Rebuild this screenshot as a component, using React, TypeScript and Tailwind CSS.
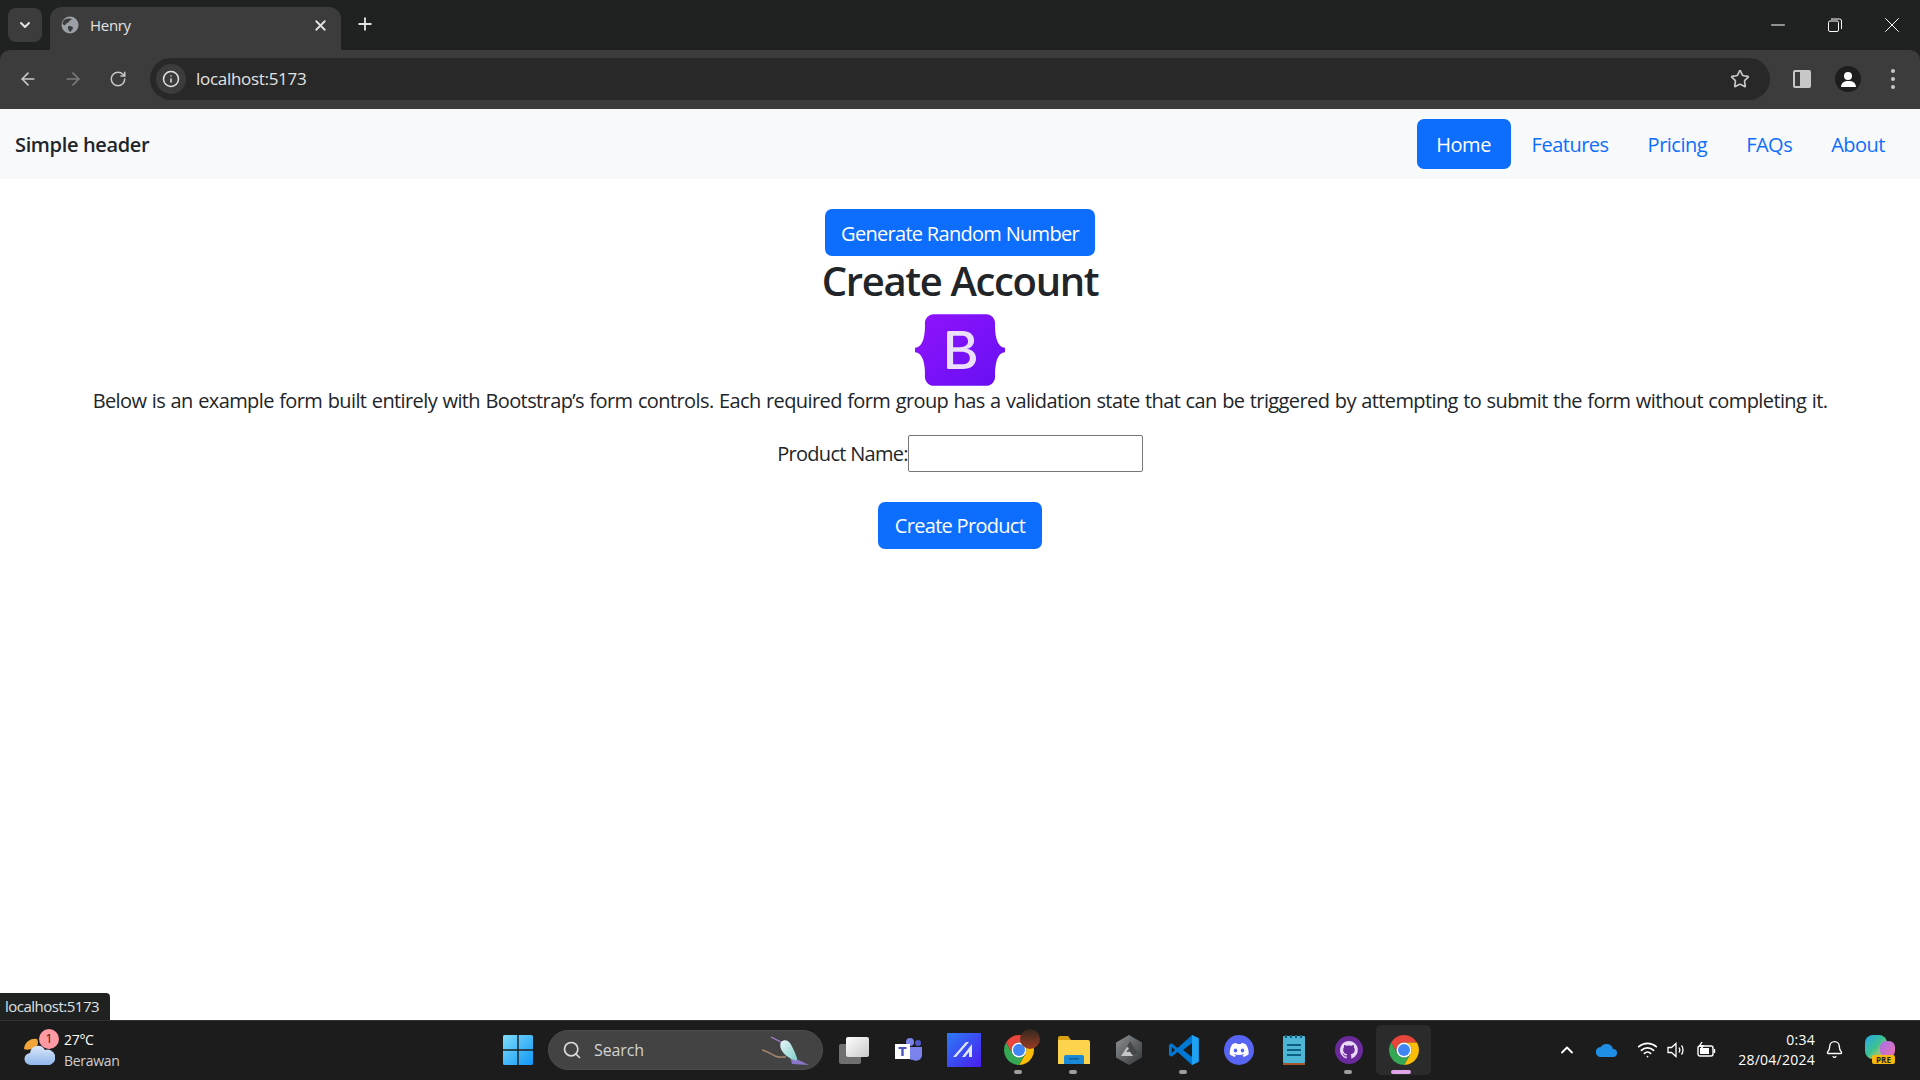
import React from "react";
import { ArrowLeft, ArrowRight, RotateCw, Info, Star, X, Plus, ChevronDown, ChevronUp, Search, Wifi, Bell, Minus } from "lucide-react";

const FONT = "font-['Open_Sans','Noto_Sans',sans-serif]";

function ChromeIcon({ size = 44 }: { size?: number }) {
  return (
    <svg width={size} height={size} viewBox="0 0 48 48">
      <path d="M6.68 14A20 20 0 0 1 41.32 14H24A10 10 0 0 0 15.34 29Z" fill="#e8453c" />
      <path d="M41.32 14A20 20 0 0 1 24 44L32.66 29A10 10 0 0 0 24 14Z" fill="#fbbc05" />
      <path d="M24 44A20 20 0 0 1 6.68 14L15.34 29A10 10 0 0 0 32.66 29Z" fill="#34a853" />
      <circle cx="24" cy="24" r="10" fill="#fff" />
      <circle cx="24" cy="24" r="8" fill="#3f86f4" />
    </svg>
  );
}

function BootstrapLogo() {
  return (
    <svg width="90" height="72" viewBox="0 0 118 94">
      <defs>
        <linearGradient id="bs" x1="0" y1="0" x2="1" y2="1">
          <stop offset="0" stopColor="#9013fe" />
          <stop offset="1" stopColor="#6610f2" />
        </linearGradient>
      </defs>
      <rect x="40" y="20" width="42" height="54" fill="#ecdffc" />
      <path
        fill="url(#bs)"
        fillRule="evenodd"
        d="M24.509 0c-6.733 0-11.715 5.893-11.492 12.284.214 6.14-.064 14.092-2.066 20.577C8.943 39.365 5.547 43.485 0 44.014v5.972c5.547.529 8.943 4.649 10.951 11.153 2.002 6.485 2.28 14.437 2.066 20.577C12.794 88.106 17.776 94 24.51 94H93.5c6.733 0 11.714-5.893 11.491-12.284-.214-6.14.064-14.092 2.066-20.577 2.009-6.504 5.396-10.624 10.943-11.153v-5.972c-5.547-.529-8.934-4.649-10.943-11.153-2.002-6.484-2.28-14.437-2.066-20.577C105.214 5.894 100.233 0 93.5 0H24.508zM80 57.863C80 66.663 73.436 72 62.543 72H44a2 2 0 01-2-2V24a2 2 0 012-2h18.437c9.083 0 15.044 4.92 15.044 12.474 0 5.302-4.01 10.049-9.119 10.88v.277C75.317 46.394 80 51.21 80 57.863zM60.521 28.34H49.948v14.934h8.905c6.884 0 10.68-2.772 10.68-7.727 0-4.643-3.264-7.207-8.012-7.207zM49.948 49.2v16.458H60.91c7.167 0 10.964-2.876 10.964-8.281 0-5.406-3.903-8.178-11.425-8.178H49.948z"
      />
    </svg>
  );
}

function TabBar() {
  return (
    <div className="h-[50px] bg-[#202221] flex items-end shrink-0">
      <div className="w-[34px] h-[34px] ml-2 mb-[8px] rounded-lg bg-[#3c3c3c] flex items-center justify-center text-[#e3e3e3]">
        <ChevronDown size={16} strokeWidth={3} />
      </div>
      <div className="w-[291px] h-[43px] ml-2 bg-[#3c3c3c] rounded-t-xl flex items-center pl-[11px] pr-3 pb-[7px] text-[#e3e3e3]">
        <svg width="18" height="18" viewBox="0 0 18 18">
          <circle cx="9" cy="9" r="8.5" fill="#9aa0a6" />
          <path d="M4 3.500c2-1 5-1.500 7-.5-1 1.500-2.500 1-3 2.500S5 7 4.500 8.500 3 9 1.500 8C1.500 6 2.500 4.500 4 3.500zM8 10c2 0 4 .5 4 2s-1.500 1.500-2 3.500c-1 .5-2 0-2.500-1.500S6.500 10 8 10z" fill="#3c3c3c" />
        </svg>
        <span className={`${FONT} ml-[11px] text-[15px] font-medium tracking-[-0.3px]`}>Henry</span>
        <X size={17} strokeWidth={2.5} className="ml-auto" />
      </div>
      <div className="w-[48px] h-[50px] pb-[2px] flex items-center justify-center text-[#e3e3e3]">
        <Plus size={20} strokeWidth={2.2} />
      </div>
      <div className="ml-auto h-[50px] flex items-center text-white pb-[1px]">
        <div className="w-[56px] flex justify-center"><Minus size={22} strokeWidth={1.1} /></div>
        <div className="w-[57px] flex justify-center">
          <svg width="14" height="14" viewBox="0 0 14 14" fill="none" stroke="#fff" strokeWidth="1">
            <rect x="0.500" y="3" width="10" height="10.500" rx="1.500" />
            <path d="M3 1h8.500A2 2 0 0 1 13.500 3v8" />
          </svg>
        </div>
        <div className="w-[57px] flex justify-center"><X size={26} strokeWidth={0.9} /></div>
      </div>
    </div>
  );
}

function Toolbar() {
  return (
    <div className="h-[59px] pb-[1px] bg-[#3c3c3c] rounded-t-[10px] flex items-center shrink-0 text-[#c7c7c7]">
      <ArrowLeft size={20} strokeWidth={2} className="ml-[18px]" />
      <ArrowRight size={20} strokeWidth={2} className="ml-[25px] text-[#7b7b7b]" />
      <RotateCw size={18} strokeWidth={2} className="ml-[26px]" />
      <div className="ml-[23px] w-[1620px] h-[42px] bg-[#282828] rounded-full flex items-center pl-[6px] pr-[20px]">
        <div className="w-[30px] h-[30px] rounded-full bg-[#3c3c3c] flex items-center justify-center text-[#e3e3e3]">
          <Info size={18} strokeWidth={2} />
        </div>
        <span className={`${FONT} ml-[10px] text-[17px] tracking-[-0.3px] text-[#e3e3e3]`}>localhost:5173</span>
        <Star size={20} strokeWidth={2} className="ml-auto text-[#c7c7c7]" />
      </div>
      <div className="ml-[23px] w-[18px] h-[18px] rounded-[2px] border-2 border-[#c7c7c7] flex justify-end">
        <div className="w-[9px] bg-[#c7c7c7]" />
      </div>
      <div className="ml-[24px] w-[26px] h-[26px] rounded-full bg-[#1d1d1d] flex flex-col items-center justify-center gap-[1px]">
        <div className="w-[8px] h-[8px] rounded-full bg-white" />
        <div className="w-[15px] h-[6px] rounded-t-full bg-white" />
      </div>
      <div className="ml-[30px] flex flex-col gap-[4px]">
        <div className="w-[4px] h-[4px] rounded-full bg-[#c7c7c7]" />
        <div className="w-[4px] h-[4px] rounded-full bg-[#c7c7c7]" />
        <div className="w-[4px] h-[4px] rounded-full bg-[#c7c7c7]" />
      </div>
    </div>
  );
}

function NavBar() {
  const links = ["Features", "Pricing", "FAQs", "About"];
  return (
    <div className={`${FONT} h-[70px] bg-[#f8f9fa] flex items-center pl-[15px] pr-[35px] shrink-0 text-[20px] tracking-[-0.5px]`}>
      <span className="font-semibold text-[#212529] pt-[1px] tracking-[-0.35px]">Simple header</span>
      <div className="ml-auto flex items-center gap-[39px]">
        <div className="h-[50px] w-[94px] -mr-[18px] pt-[2px] bg-[#0d6efd] text-white rounded-[7px] flex items-center justify-center">Home</div>
        {links.map((label) => (
          <span key={label} className="pt-[1px] text-[#0d6efd]">{label}</span>
        ))}
      </div>
    </div>
  );
}

function Main() {
  return (
    <div className={`${FONT} flex-1 bg-white flex flex-col items-center pt-[30px] text-[20px] tracking-[-0.7px] text-[#212529]`}>
      <button className="h-[47px] w-[270px] pt-[2px] bg-[#0d6efd] text-white rounded-[7px] whitespace-nowrap">Generate Random Number</button>
      <h1 className="text-[40px] leading-[48px] font-semibold mt-[1px] mb-[9px] tracking-[-1.35px]">Create Account</h1>
      <BootstrapLogo />
      <p className="leading-[30px] mb-[19px] whitespace-nowrap tracking-[-0.6px] [word-spacing:0.8px]">
        Below is an example form built entirely with Bootstrap’s form controls. Each required form group has a validation state that can be triggered by attempting to submit the form without completing it.
      </p>
      <div className="flex items-center h-[37px]">
        <label>Product Name:</label>
        <input className="w-[235px] h-[37px] bg-white border border-[#767676] rounded-[2px]" />
      </div>
      <button className="mt-[30px] h-[47px] w-[164px] bg-[#0d6efd] text-white rounded-[7px] whitespace-nowrap">Create Product</button>
    </div>
  );
}

function WeatherIcon() {
  return (
    <div className="relative w-[32px] h-[34px]">
      <svg width="32" height="34" viewBox="0 0 32 34">
        <defs>
          <linearGradient id="cloud" x1="0" y1="0" x2="0" y2="1">
            <stop offset="0" stopColor="#dbe8fa" />
            <stop offset="1" stopColor="#8fb6ea" />
          </linearGradient>
        </defs>
        <path d="M14 2a11 11 0 0 0-13 10c2 1 6 1 10-1s5-5 3-9z" fill="#f0a43a" transform="translate(0 4)" />
        <path d="M7 32a6 6 0 0 1-1-12 8 8 0 0 1 15-3 7 7 0 0 1 5 15z" fill="url(#cloud)" transform="translate(1 0)" />
      </svg>
      <div className="absolute -top-[4px] left-[16px] w-[20px] h-[20px] rounded-full bg-[#ff99a4] text-[#3a1a1f] text-[13px] flex items-center justify-center">1</div>
    </div>
  );
}

function TaskIcon({ children, dot, active }: { children?: React.ReactNode; dot?: boolean; active?: boolean }) {
  return (
    <div className={`relative w-[55px] h-[50px] rounded-[5px] flex items-center justify-center ${active ? "bg-[#2b2b2b]" : ""}`}>
      {children}
      {dot && <div className="absolute bottom-[1px] left-[23px] w-[8px] h-[4px] rounded-full bg-[#9e9e9e]" />}
      {active && <div className="absolute bottom-[1px] left-[15px] w-[20px] h-[4px] rounded-full bg-[#dfa6e6]" />}
    </div>
  );
}

function Taskbar() {
  return (
    <div className={`${FONT} h-[60px] bg-[#1c1c1c] border-t border-[#333] flex items-center shrink-0 relative text-white`}>
      <div className="flex items-center ml-[23px] w-[480px] pb-[2px]">
        <WeatherIcon />
        <div className="ml-[9px] text-[14px] leading-[21px] tracking-[-0.3px]">
          <div>27°C</div>
          <div className="text-[#cfcfcf]">Berawan</div>
        </div>
      </div>

      {/* start + search */}
      <div className="absolute left-[503px] top-[4px] flex items-center">
        <svg width="30" height="30" viewBox="0 0 30 30">
          <defs>
            <linearGradient id="win" x1="0" y1="0" x2="1" y2="1">
              <stop offset="0" stopColor="#7fdcfb" />
              <stop offset="1" stopColor="#0f97f5" />
            </linearGradient>
          </defs>
          <path d="M0 1.500A1.500 1.500 0 0 1 1.500 0H14.300V14.300H0zM15.700 0H28.500A1.500 1.500 0 0 1 30 1.500V14.300H15.700zM0 15.700H14.300V30H1.500A1.500 1.500 0 0 1 0 28.500zM15.700 15.700H30V28.500A1.500 1.500 0 0 1 28.500 30H15.700z" fill="url(#win)" />
        </svg>
        <div className="ml-[15px] w-[275px] h-[40px] rounded-full bg-[#434343] border border-[#4d4d4d] flex items-center pl-[13px] relative">
          <Search size={20} strokeWidth={2} className="text-[#dcdcdc]" />
          <span className="ml-[12px] text-[16px] text-[#d4d4d4] tracking-[-0.1px]">Search</span>
          <svg width="48" height="36" viewBox="0 0 48 36" className="absolute right-[12px] top-[2px]">
            <defs>
              <linearGradient id="bird" x1="0" y1="0" x2="1" y2="1">
                <stop offset="0" stopColor="#eaf6fb" />
                <stop offset="1" stopColor="#7fcfc9" />
              </linearGradient>
            </defs>
            <path d="M0 17c5 1 9 4 13 6s8 1 11 1" stroke="#a5866c" strokeWidth="1.500" fill="none" />
            <path d="M28 23l19 9-17-1z" fill="#8d76c9" />
            <path d="M19 9c3-3 7-2 9 1s5 9 7 15c.5 2-1 3-3 2-5-2-11-6-13-11-1-3-1-5 0-7z" fill="url(#bird)" />
            <path d="M19 9L9 4" stroke="#b07fe0" strokeWidth="1.200" />
          </svg>
        </div>
        <div className="ml-[3px] flex items-center">
          <TaskIcon>
            <div className="relative w-[30px] h-[27px]">
              <div className="absolute left-0 bottom-0 w-[22px] h-[20px] rounded-[2px] bg-[#6f6f6f]" />
              <div className="absolute right-0 top-0 w-[23px] h-[20px] rounded-[2px] bg-gradient-to-br from-white to-[#c9c9c9]" />
            </div>
          </TaskIcon>
          <TaskIcon>
            <svg width="28" height="26" viewBox="0 0 28 26">
              <circle cx="15" cy="5" r="4" fill="#7b83eb" />
              <circle cx="23" cy="6" r="3" fill="#5059c9" />
              <path d="M11 10h16v8a6 6 0 0 1-9 5 7 7 0 0 1-7-6z" fill="#7b83eb" />
              <rect x="0" y="7" width="15" height="15" fill="#fff" />
              <path d="M3.500 10h8v2H8.700v7H6.300v-7H3.500z" fill="#4b53bc" />
            </svg>
          </TaskIcon>
          <TaskIcon>
            <svg width="34" height="34" viewBox="0 0 34 34">
              <defs>
                <linearGradient id="mail" x1="0" y1="0" x2="1" y2="1">
                  <stop offset="0" stopColor="#2b7bf5" />
                  <stop offset="1" stopColor="#4a1df0" />
                </linearGradient>
              </defs>
              <rect width="34" height="34" fill="url(#mail)" />
              <path d="M6 24L19 9h3L9 24zM15 24L25 11v13h-3v-5l-4 5z" fill="#dfe7ff" />
            </svg>
          </TaskIcon>
          <TaskIcon dot>
            <div className="relative">
              <ChromeIcon size={36} />
              <div className="absolute -top-[3px] -right-[3px] w-[20px] h-[20px] rounded-full bg-gradient-to-b from-[#33261f] to-[#9c3a20]" />
            </div>
          </TaskIcon>
          <TaskIcon dot>
            <svg width="32" height="28" viewBox="0 0 32 28">
              <path d="M0 2a2 2 0 0 1 2-2h8l3 4H0z" fill="#d9a00f" />
              <path d="M0 4h30a2 2 0 0 1 2 2v22H0z" fill="#fcd34d" />
              <path d="M6 21a2 2 0 0 1 2-2h16a2 2 0 0 1 2 2v7H6z" fill="#1a8ad6" />
              <rect x="11" y="22" width="10" height="1.500" fill="#0b5f9e" />
            </svg>
          </TaskIcon>
          <TaskIcon>
            <svg width="28" height="30" viewBox="0 0 28 30">
              <defs>
                <linearGradient id="hex" x1="0" y1="0" x2="1" y2="1">
                  <stop offset="0" stopColor="#8e9194" />
                  <stop offset="1" stopColor="#34373a" />
                </linearGradient>
              </defs>
              <path d="M14 0L27 7.500V22.500L14 30 1 22.500V7.500z" fill="url(#hex)" />
              <path d="M15 6L23 19H17L12 12z" fill="#44474a" />
              <path d="M12 12L6 21H18L15 17H11L14 13z" fill="#c4c7c9" />
            </svg>
          </TaskIcon>
          <TaskIcon dot>
            <svg width="32" height="32" viewBox="0 0 100 100">
              <path d="M75 3L96 13V87L75 97 30 56 11 71 3 66V34L11 29 30 44z" fill="#0078d4" />
              <path d="M75 3L96 13V87L75 97z" fill="#1fa2f2" />
              <path d="M75 28L47 50 75 72z" fill="#1c1c1c" />
              <path d="M12 41L22 50 12 59z" fill="#1c1c1c" />
            </svg>
          </TaskIcon>
          <TaskIcon>
            <svg width="30" height="30" viewBox="0 0 30 30">
              <circle cx="15" cy="15" r="15" fill="#5865f2" />
              <path d="M8 9.500c2-1 3.500-1.300 4.500-1.400l.5 1c1.300-.2 2.700-.2 4 0l.5-1c1 .1 2.500.4 4.500 1.400 2 3 3 6.500 2.600 10-1.800 1.300-3.400 2-5 2.400l-1-1.700 1.800-.9-.4-.3c-3 1.400-6.600 1.400-9.600 0l-.4.3 1.800.9-1 1.700c-1.600-.4-3.200-1.100-5-2.400-.4-3.500.600-7 2.200-10z" fill="#fff" />
              <ellipse cx="11.500" cy="15.500" rx="1.800" ry="2" fill="#5865f2" />
              <ellipse cx="18.500" cy="15.500" rx="1.800" ry="2" fill="#5865f2" />
            </svg>
          </TaskIcon>
          <TaskIcon>
            <svg width="24" height="30" viewBox="0 0 24 30">
              <rect y="1" width="22" height="27" rx="1" fill="#4db6d6" transform="translate(1 0)" />
              <rect x="1" y="28" width="22" height="2" fill="#a4582a" />
              <path d="M5 9h14v2H5zM5 14h14v2H5zM5 19h14v2H5z" fill="#0d5f80" />
              <path d="M3 0h2v3H3zM8 0h2v3H8zM13 0h2v3h-2zM18 0h2v3h-2z" fill="#14607c" />
            </svg>
          </TaskIcon>
          <TaskIcon dot>
            <svg width="28" height="28" viewBox="0 0 28 28">
              <circle cx="14" cy="14" r="14" fill="#6a2a9c" />
              <path d="M14 5a9 9 0 0 0-3 17.500c.500.100.600-.200.600-.500v-1.700c-2.500.500-3-1-3-1-.400-1-1-1.300-1-1.300-.800-.500.100-.500.100-.500.900.100 1.400 1 1.400 1 .800 1.400 2.100 1 2.600.800.100-.600.300-1 .600-1.200-2-.200-4.100-1-4.100-4.400 0-1 .300-1.800.900-2.400-.100-.200-.400-1.100.100-2.400 0 0 .800-.200 2.500.900a8.700 8.700 0 0 1 4.500 0c1.700-1.100 2.500-.900 2.500-.900.500 1.300.200 2.200.100 2.400.600.600.900 1.400.900 2.400 0 3.400-2.100 4.200-4.100 4.400.300.300.600.800.600 1.700V22c0 .300.200.600.600.500A9 9 0 0 0 14 5z" fill="#e8d8f5" />
            </svg>
          </TaskIcon>
          <TaskIcon active>
            <ChromeIcon size={36} />
          </TaskIcon>
        </div>
      </div>

      {/* system tray */}
      <div className="ml-auto flex items-center pb-[2px]">
        <ChevronUp size={20} strokeWidth={2.2} className="mr-[19px]" />
        <svg width="22" height="14" viewBox="0 0 22 14" className="mr-[19px]">
          <path d="M5 14a5 5 0 0 1-.500-10A7 7 0 0 1 17 6a4 4 0 0 1 0 8z" fill="#1f8fe6" />
        </svg>
        <Wifi size={21} strokeWidth={2} className="mr-[9px]" />
        <svg width="20" height="18" viewBox="0 0 20 18" fill="none" stroke="#fff" strokeWidth="1.300" className="mr-[10px]">
          <path d="M1 6.500h3.500L9 2.500v13l-4.500-4H1z" />
          <path d="M12 6.500c1 1.500 1 3.500 0 5M14.500 4.500c2 2.500 2 6.500 0 9" />
        </svg>
        <svg width="20" height="18" viewBox="0 0 20 18" fill="none" stroke="#fff" strokeWidth="1.400" className="mr-[21px]">
          <rect x="1" y="5" width="15" height="10" rx="2" />
          <rect x="3" y="7" width="9" height="6" fill="#fff" stroke="none" />
          <path d="M17.500 8v4" />
          <path d="M5 1L2.500 5H6L4 8" />
        </svg>
        <div className="text-right text-[14px] leading-[20px] tracking-[0.25px]">
          <div>0:34</div>
          <div>28/04/2024</div>
        </div>
        <Bell size={19} strokeWidth={1.700} className="ml-[10px]" />
        <div className="relative w-[30px] h-[29px] ml-[21px] mr-[25px]">
          <div className="absolute left-0 top-0 w-[22px] h-[24px] rounded-[8px] bg-gradient-to-br from-[#2fa7e8] via-[#3fc28d] to-[#e5c93b]" />
          <div className="absolute right-0 top-[6px] w-[15px] h-[16px] rounded-[6px] bg-gradient-to-br from-[#a46ee8] to-[#ee6fb0]" />
          <div className="absolute right-0 bottom-0 w-[23px] h-[9px] rounded-[2px] bg-[#f5b80f] text-[8px] leading-[9px] text-center font-bold text-[#222] tracking-normal">PRE</div>
        </div>
      </div>

      <div className="absolute left-0 -top-[28px] w-[110px] h-[27px] bg-[#202221] rounded-tr-[4px] pl-[5px] text-[15px] leading-[27px] text-[#dfe1e5] tracking-[-0.5px]">
        localhost:5173
      </div>
    </div>
  );
}

export default function App() {
  return (
    <div className="w-[1920px] h-[1080px] flex flex-col overflow-hidden bg-[#202221]">
      <TabBar />
      <Toolbar />
      <NavBar />
      <Main />
      <Taskbar />
    </div>
  );
}
